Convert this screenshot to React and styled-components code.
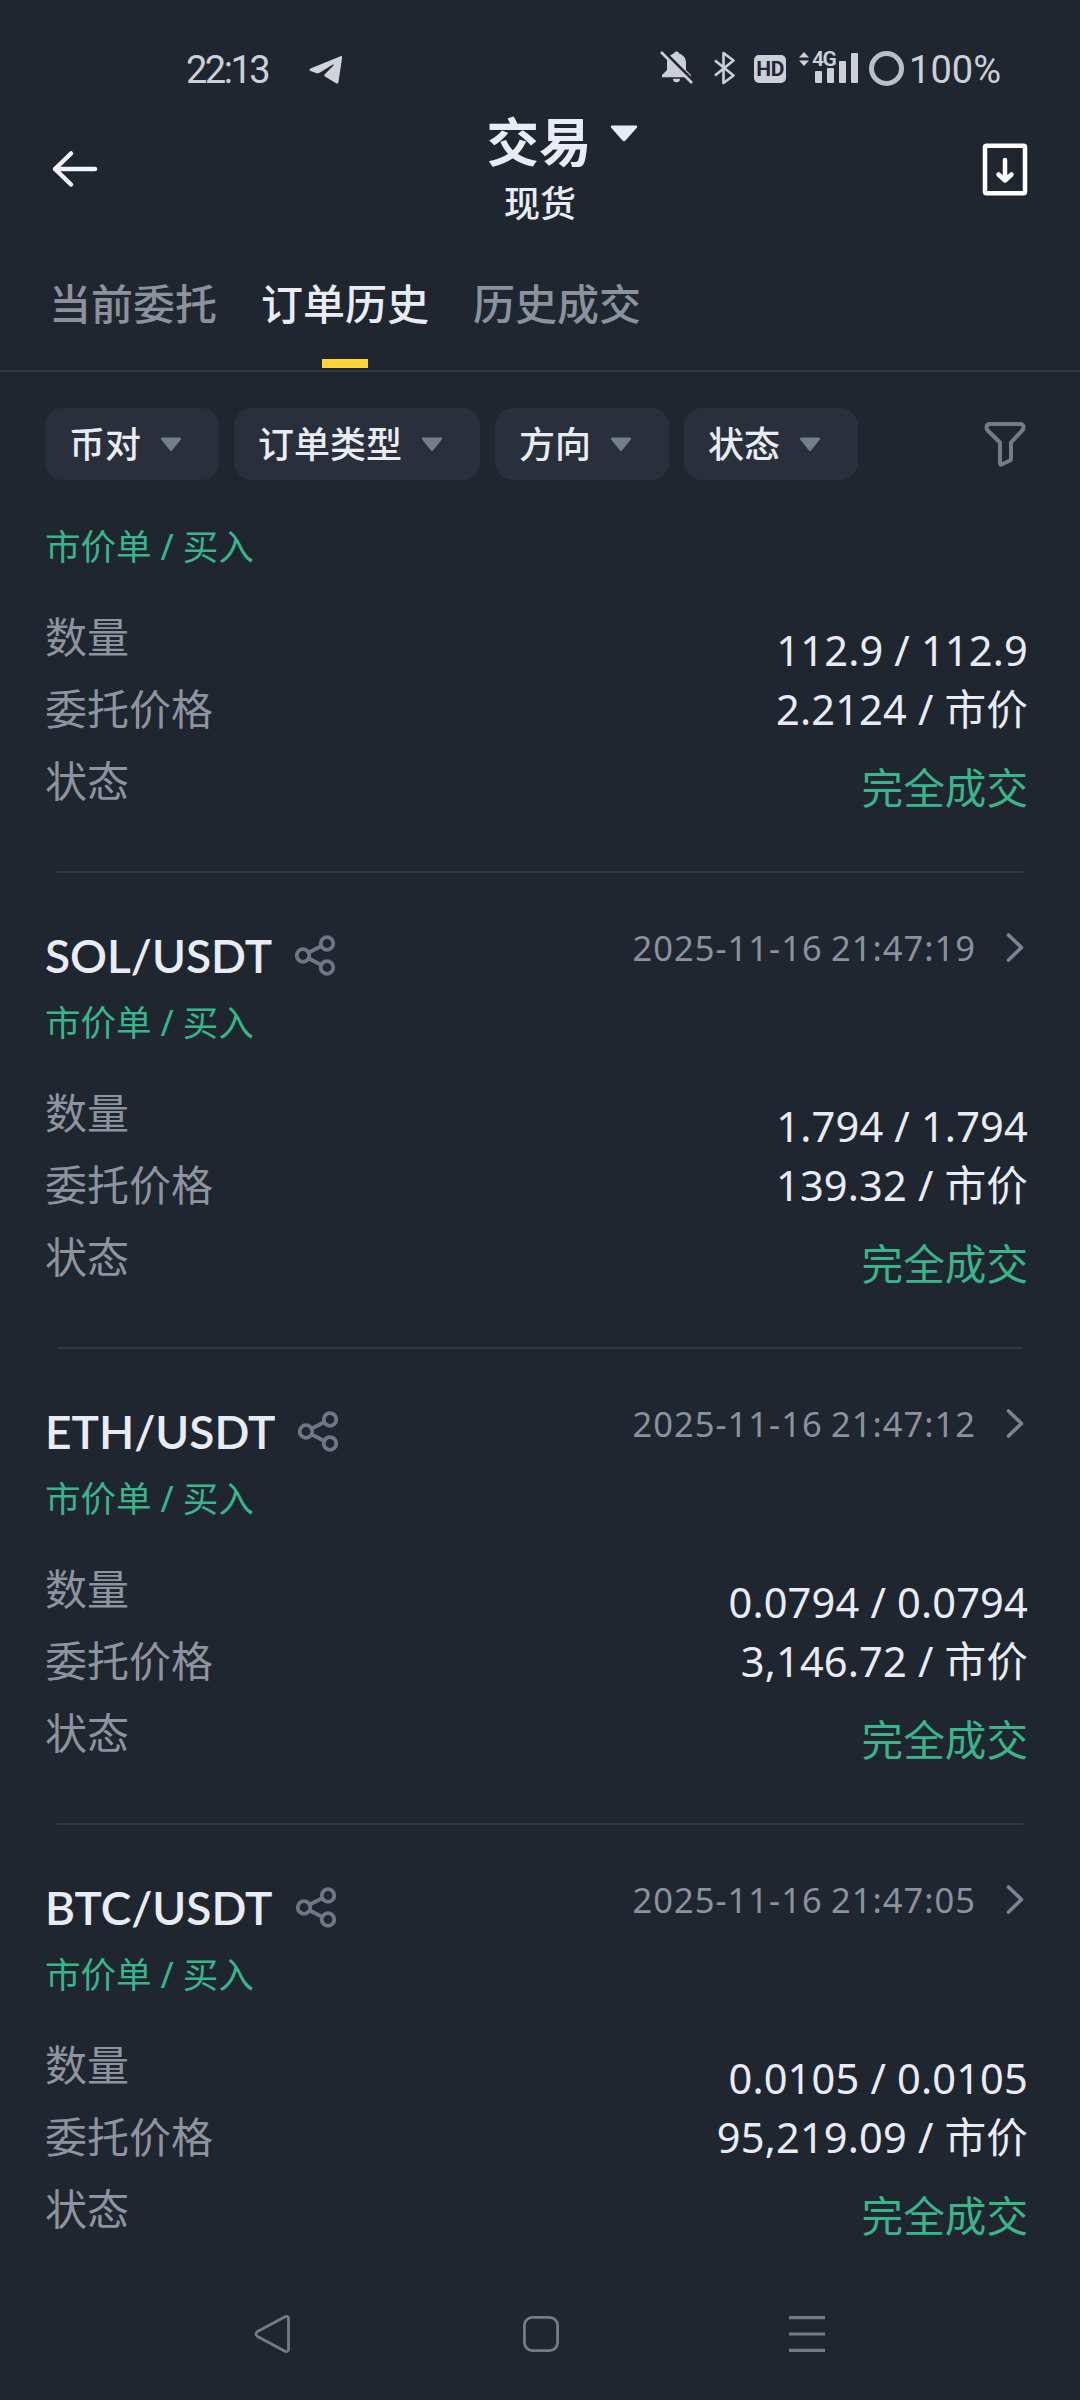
import React from 'react'
import styled, { createGlobalStyle } from 'styled-components'

const orders = [
  { id: 1, amount: '112.9 / 112.9', price: '2.2124 / 市价' },
  { id: 2, pair: 'SOL/USDT', time: '2025-11-16 21:47:19', amount: '1.794 / 1.794', price: '139.32 / 市价' },
  { id: 3, pair: 'ETH/USDT', time: '2025-11-16 21:47:12', amount: '0.0794 / 0.0794', price: '3,146.72 / 市价' },
  { id: 4, pair: 'BTC/USDT', time: '2025-11-16 21:47:05', amount: '0.0105 / 0.0105', price: '95,219.09 / 市价' },
]

const tabs = ['当前委托', '订单历史', '历史成交']
const filters = ['币对', '订单类型', '方向', '状态']

const StatusIcons = () => (
  <StatusRight>
    <svg width="33" height="34" viewBox="0 0 33 34" fill="#ccd0d6">
      <path d="M16.5 1.5a2.6 2.6 0 0 1 2.6 2C23.6 4.800 26 8.500 26 13v7l5 5v2.200H2V25l5-5v-7c0-4.500 2.400-8.200 6.900-9.500a2.600 2.600 0 0 1 2.600-2z" />
      <path d="M13 28.800h7a3.500 3.500 0 0 1-7 0z" />
      <path d="M2.500 0.500L33 31" stroke="#202630" strokeWidth="3.500" />
      <path d="M1 2L32 33" stroke="#ccd0d6" strokeWidth="2.600" />
    </svg>
    <Bluetooth width="21" height="34" viewBox="0 0 21 34" fill="none" stroke="#ccd0d6" strokeWidth="2.600" strokeLinejoin="round">
      <path d="M1 9.500L19.500 24.500L9.500 32V2L19.500 9.500L1 24.500" />
    </Bluetooth>
    <Hd>HD</Hd>
    <Signal>
      <svg width="60" height="34" viewBox="0 0 60 34" fill="#ccd0d6">
        <path d="M0 6.500L5 1l5 5.500zM0 9.500h10L5 15z" />
        <rect x="16" y="20" width="7" height="12" rx="1" />
        <rect x="28" y="17" width="7" height="15" rx="1" />
        <rect x="40" y="10" width="7" height="22" rx="1" />
        <rect x="52" y="2" width="7" height="30" rx="1" />
      </svg>
      <NetType>4G</NetType>
    </Signal>
    <Battery />
    <Percent>100%</Percent>
  </StatusRight>
)

const ShareIcon = () => (
  <svg width="42" height="42" viewBox="0 0 42 42" fill="none" stroke="#6f7784" strokeWidth="3.800">
    <circle cx="9" cy="20.500" r="6.300" />
    <circle cx="33" cy="8.500" r="6.300" />
    <circle cx="33" cy="32.500" r="6.300" />
    <path d="M14.800 17.500L27 11.300M14.800 23.500L27 29.700" />
  </svg>
)

const Order = ({ order }) => (
  <OrderItem>
    {order.pair && (
      <OrderHead>
        <Pair>
          {order.pair}
          <ShareIcon />
        </Pair>
        <Time>
          {order.time}
          <svg width="18" height="30" viewBox="0 0 18 30" fill="none" stroke="#7d8491" strokeWidth="3.600" strokeLinecap="round" strokeLinejoin="round">
            <path d="M2.500 2L15.500 14.500L2.500 27" />
          </svg>
        </Time>
      </OrderHead>
    )}
    <OrderType>市价单 / 买入</OrderType>
    <OrderBody>
      <Labels>
        <Label>数量</Label>
        <Label>委托价格</Label>
        <Label>状态</Label>
      </Labels>
      <Values>
        <Amount>{order.amount}</Amount>
        <Price>{order.price}</Price>
        <State>完全成交</State>
      </Values>
    </OrderBody>
  </OrderItem>
)

const App = () => {
  return (
    <Screen>
      <GlobalStyle />
      <StatusBar>
        <StatusLeft>
          <Clock>22:13</Clock>
          <svg width="34" height="30" viewBox="0 0 34 30" fill="#d0d4d8">
            <path d="M1.500 13.500L31.500 1.200q1.800-.6 1.600 1.300L29.500 27q-.5 2.300-2.500 1.200L16 21.500q-1.500-1 0-2.500l8.500-8.500q.8-1.500-1-.800L11 17.500q-2 1-4 .4L1.500 16q-2-1 0-2.500z" />
          </svg>
        </StatusLeft>
        <StatusIcons />
      </StatusBar>

      <Header>
        <svg width="48" height="38" viewBox="0 0 48 38" fill="none" stroke="#f2f4f9" strokeWidth="4.500" strokeLinecap="round" strokeLinejoin="round">
          <path d="M45 19H5M21 3.500L5 19L21 34.500" />
        </svg>
        <Heading>
          <Title>
            交易
            <svg width="28" height="17" viewBox="0 0 28 17" fill="#eaecf4">
              <path d="M2 0.500h24q2 .5.800 2.200L15.500 15.500q-1.500 1.300-3 0L1.200 2.700Q0 1 2 .5z" />
            </svg>
          </Title>
          <SubTitle>现货</SubTitle>
        </Heading>
        <svg width="46" height="53" viewBox="0 0 46 53" fill="none" stroke="#fff" strokeWidth="4.500">
          <rect x="3" y="2.700" width="40" height="47.500" rx="1.500" />
          <path d="M23 17v20M16.500 31.500L23 37.500L29.500 31.500" strokeLinecap="round" strokeLinejoin="round" />
        </svg>
      </Header>

      <TabBar>
        {tabs.map((tab, i) => (
          <Tab key={tab} $active={i === 1}>{tab}</Tab>
        ))}
      </TabBar>

      <FilterBar>
        {filters.map((name) => (
          <Chip key={name}>
            <ChipText>{name}</ChipText>
            <svg width="22" height="15" viewBox="0 0 22 15" fill="#747d8a">
              <path d="M1.800 0.500h18.400q1.600.4.600 2L12 13.500q-1 1-2 0L1.200 2.500Q.2.900 1.800.5z" />
            </svg>
          </Chip>
        ))}
        <Funnel width="42" height="46" viewBox="0 0 42 46" fill="none" stroke="#747b87" strokeWidth="4" strokeLinejoin="round">
          <path d="M6 3h30q3.500 0 3.500 3.500 0 1.500-1 2.700L27 21.500V38q0 1-1 1.500L17.500 43.500q-1.500.5-1.500-1V21.500L3.500 9.200Q2.500 8 2.500 6.500 2.500 3 6 3z" />
        </Funnel>
      </FilterBar>

      <OrderList>
        {orders.map((order) => (
          <Order key={order.id} order={order} />
        ))}
      </OrderList>

      <NavBar>
        <svg width="38" height="40" viewBox="0 0 38 40" fill="none" stroke="#757b85" strokeWidth="2.800" strokeLinejoin="round">
          <path d="M3.500 17.500L31 2.800q3.500-1.300 3.500 2v30.400q0 3.300-3.500 2L3.500 22.500q-3-2.500 0-5z" />
        </svg>
        <svg width="38" height="40" viewBox="0 0 38 40" fill="none" stroke="#757b85" strokeWidth="2.800">
          <rect x="3.400" y="3.400" width="33.200" height="33.200" rx="8" />
        </svg>
        <svg width="38" height="40" viewBox="0 0 38 40" fill="none" stroke="#757b85" strokeWidth="3.200">
          <path d="M1 3.600h36M1 20h36M1 36.400h36" />
        </svg>
      </NavBar>
    </Screen>
  )
}

const GlobalStyle = createGlobalStyle`
  * {
    box-sizing: border-box;
  }
  body {
    margin: 0;
    background: #202630;
    font-family: 'Noto Sans', 'Noto Sans CJK SC', sans-serif;
  }
  svg {
    display: block;
    flex: none;
  }
`;
const Screen = styled.div`
  display: flex;
  flex-direction: column;
  width: 1080px;
  height: 2400px;
  overflow: hidden;
  color: #e9ecf5;
`;

const StatusBar = styled.div`
  display: flex;
  justify-content: space-between;
  height: 100px;
  padding: 50px 79px 0 186px;
  color: #ccd0d8;
  font-family: Roboto, sans-serif;
  font-size: 38px;
  line-height: 40px;
`;
const StatusLeft = styled.div`
  display: flex;
  align-items: flex-start;
  svg {
    margin: 5px 0 0 41px;
  }
`;
const Clock = styled.span`
  letter-spacing: -2.5px;
`;
const StatusRight = styled.div`
  display: flex;
  align-items: flex-start;
`;
const Bluetooth = styled.svg`
  margin: 1px 0 0 21px;
`;
const Hd = styled.span`
  width: 32px;
  height: 28px;
  margin: 5px 0 0 19px;
  border-radius: 5px;
  background: #ccd0d6;
  color: #202630;
  font-size: 21px;
  font-weight: 700;
  line-height: 29px;
  letter-spacing: -0.5px;
  text-align: center;
`;
const Signal = styled.div`
  position: relative;
  margin: 1px 0 0 13px;
`;
const NetType = styled.span`
  position: absolute;
  top: -1px;
  left: 13px;
  font-size: 21px;
  font-weight: 600;
  line-height: 18px;
  letter-spacing: -1.5px;
`;
const Battery = styled.span`
  width: 35px;
  height: 35px;
  margin: 1px 5px 0 10px;
  border: 5px solid #b9bec9;
  border-radius: 50%;
`;
const Percent = styled.span``;

const Header = styled.div`
  display: flex;
  justify-content: space-between;
  align-items: center;
  height: 138px;
  padding: 0 52px 0 50px;
`;
const Heading = styled.div`
  display: flex;
  flex-direction: column;
  align-items: center;
  height: 138px;
  padding-top: 10px;
`;
const Title = styled.div`
  display: flex;
  align-items: flex-start;
  margin-left: 44px;
  font-size: 52.5px;
  font-weight: 700;
  line-height: 64px;
  svg {
    margin: 15px 0 0 18px;
  }
`;
const SubTitle = styled.div`
  font-size: 36px;
  font-weight: 500;
  line-height: 59px;
`;

const TabBar = styled.div`
  display: flex;
  gap: 44px;
  height: 134px;
  padding: 0 49px;
  border-bottom: 2px solid #323843;
`;
const Tab = styled.div`
  display: flex;
  flex-direction: column;
  align-items: center;
  color: ${(props) => (props.$active ? '#e9ecf5' : '#8b919d')};
  font-size: 42px;
  font-weight: 500;
  line-height: 131px;
  &::after {
    content: '';
    width: 46px;
    height: 9px;
    margin-top: -10px;
    background: ${(props) => (props.$active ? '#fcd535' : 'transparent')};
  }
`;

const FilterBar = styled.div`
  display: flex;
  align-items: center;
  gap: 15.5px;
  height: 144px;
  padding: 0 54px 0 45px;
`;
const Chip = styled.div`
  display: flex;
  align-items: center;
  gap: 19px;
  height: 72px;
  padding: 0 36.5px 0 24px;
  border-radius: 18px;
  background: #2a303b;
`;
const ChipText = styled.span`
  padding-top: 2px;
  font-size: 36px;
  font-weight: 500;
  line-height: 70px;
`;
const Funnel = styled.svg`
  margin-left: auto;
`;

const OrderList = styled.div`
  flex: 1;
  min-height: 0;
  overflow: hidden;
`;
const OrderItem = styled.div`
  position: relative;
  height: 476px;
  padding: 50px 52px 0 45px;
  &:first-child {
    height: 358px;
    margin-top: -1px;
    padding-top: 0;
  }
  &::after {
    content: '';
    position: absolute;
    right: 57px;
    bottom: 0;
    left: 57px;
    height: 2px;
    background: #323843;
  }
`;
const OrderHead = styled.div`
  display: flex;
  justify-content: space-between;
  align-items: flex-start;
  height: 68px;
`;
const Pair = styled.div`
  display: flex;
  align-items: center;
  gap: 22px;
  height: 66px;
  font-family: Lato, 'Noto Sans', sans-serif;
  font-size: 46px;
  font-weight: 600;
  line-height: 66px;
`;
const Time = styled.div`
  display: flex;
  align-items: center;
  gap: 30px;
  height: 49px;
  padding-right: 4px;
  color: #8b919d;
  font-size: 34.5px;
  letter-spacing: 1px;
  word-spacing: -1.5px;
`;
const OrderType = styled.div`
  color: #38b58a;
  font-size: 35.6px;
  line-height: 62px;
  letter-spacing: -0.1px;
`;
const OrderBody = styled.div`
  display: flex;
  justify-content: space-between;
`;
const Labels = styled.div`
  padding-top: 24px;
`;
const Label = styled.div`
  color: #8e949f;
  font-size: 42px;
  line-height: 72px;
`;
const Values = styled.div`
  padding-top: 44px;
  font-size: 41.6px;
  text-align: right;
`;
const Amount = styled.div`
  letter-spacing: 0.15px;
  line-height: 58px;
`;
const Price = styled.div`
  letter-spacing: 0.15px;
  line-height: 60px;
`;
const State = styled.div`
  color: #38b58a;
  line-height: 98px;
`;

const NavBar = styled.div`
  display: flex;
  justify-content: space-between;
  align-items: center;
  height: 132px;
  padding: 0 254px;
`;

export default App;
